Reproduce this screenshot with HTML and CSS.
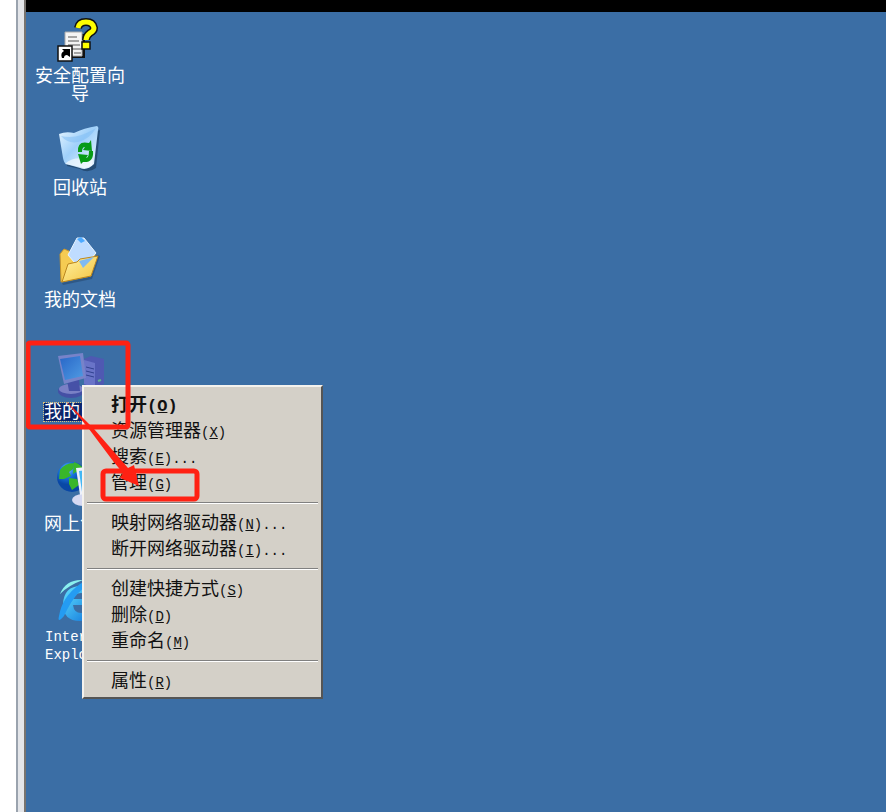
FILE: index.html
```html
<!DOCTYPE html>
<html lang="zh-CN">
<head>
<meta charset="utf-8">
<title>桌面</title>
<link rel="stylesheet" href="styles.css">
</head>
<body>
<div class="frame"></div>
<main class="screen">
  <div class="topbar"></div>
  <div class="desktop">
    <nav class="icons">
      <button class="item">
        <svg viewBox="0 0 48 48">
          <path d="M12 17h17v24H12z" fill="#111"/>
          <path d="M9 15h17v24H9z" fill="#f4f4f4" stroke="#aaa"/>
          <path d="M12 20h9M12 24h11M12 28h12M16 32h10M18 36h7" stroke="#8a8a8a" stroke-width="1.5"/>
          <path d="M22 11q1-6 8-6t8 6q0 3-4 5-4 3-4 7" fill="none" stroke="#111" stroke-width="8"/>
          <path d="M22 11q1-6 8-6t8 6q0 3-4 5-4 3-4 7" fill="none" stroke="#ff0" stroke-width="5"/>
          <path d="M26 25h8v7h-8z" fill="#ff0" stroke="#111" stroke-width="1.5"/>
          <path d="M2 29h14v15H2z" fill="#fff" stroke="#111" stroke-width="1.5"/>
          <path d="M6 32h8v8l-3-2q-3 0-3 3H6q-2-5 2-7z" fill="#000"/>
        </svg>
        <span class="label">安全配置向导</span>
      </button>
      <button class="item">
        <svg viewBox="0 0 48 48">
          <defs><linearGradient id="bin" x2="1" y2="1"><stop stop-color="#eaf7ff"/><stop offset=".45" stop-color="#9fd0fa"/><stop offset="1" stop-color="#f2faff"/></linearGradient></defs>
          <path d="M6 7q15 2 37-7l-4 38q-8 6-16 1L10 36z" fill="#173757" opacity=".6" transform="translate(1 1)"/>
          <path d="M3 5Q10 2 18 4 28-1 41-3q2 1 1 4l-4 34q-7 7-14 4l-14-4q-2-1-3-6z" fill="url(#bin)"/>
          <path d="M5 7q16 4 35-8-6 11-18 14Q12 15 5 7z" fill="#7dbbf4" opacity=".5"/>
          <path d="M9 35q8-9 28-4l-1 5q-6 5-12 2z" fill="#fff" opacity=".6"/>
          <path d="M22 23q-1-12 11-9l2-3 1 11-9-1 2-3q-3 0-3 5zM37 22q1 12-10 11l-2 2-3-10 10 1-2 3q3 0 3-7z" fill="#079b16"/>
        </svg>
        <span class="label">回收站</span>
      </button>
      <button class="item">
        <svg viewBox="0 0 48 48">
          <defs><linearGradient id="fold" x2="1" y2="1"><stop stop-color="#fff3a4"/><stop offset="1" stop-color="#f4c33f"/></linearGradient></defs>
          <path d="M6 42l27-6 8-22 3 1-8 23-29 6z" fill="#25476d" opacity=".55"/>
          <path d="M4 13l4-5 5 2 2 4 24-1-4 22L5 41z" fill="#f5cb52" stroke="#c7942b"/>
          <path d="M21-3l7 0L40 12 25 29 12 14z" fill="#bfdcff" stroke="#e9f5ff"/>
          <path d="M21-2l4-2 4 4-4 2z" fill="#4eaaff"/>
          <path d="M6 41l6-18 9-2 3-3 18-3-7 20z" fill="url(#fold)" stroke="#bb861e"/>
          <path d="M23 20l15-4-11 11z" fill="#80baf3"/>
        </svg>
        <span class="label">我的文档</span>
      </button>
      <button class="item selected">
        <svg viewBox="0 0 48 48">
          <defs><linearGradient id="pc" x2="1" y2="1"><stop stop-color="#2866c7"/><stop offset="1" stop-color="#4f9be3"/></linearGradient></defs>
          <path d="M28 6l7-3 13 3v25l-11 5-9-4z" fill="#4f59b2"/>
          <path d="M28 7l11 3v25l-11-4z" fill="#6974c8"/>
          <path d="M30 14l8 2M30 18l8 2M30 22l8 2" stroke="#30418f"/>
          <path d="M42 28l3-1" stroke="#62b38e" stroke-width="2"/>
          <ellipse cx="15" cy="38" rx="13" ry="7" fill="#4550a5"/>
          <ellipse cx="15" cy="36" rx="12" ry="5" fill="#7a80c5"/>
          <path d="M11 27h12l1 11H13z" fill="#4651a7"/>
          <path d="M2 3l25-3 3 25-22 6z" fill="#7783c9"/>
          <path d="M4 6l20-3 3 20-18 4z" fill="url(#pc)"/>
        </svg>
        <span class="label">我的电脑</span>
      </button>
      <button class="item">
        <svg viewBox="0 0 48 48">
          <defs><radialGradient id="globe" cx=".35" cy=".25"><stop stop-color="#83c8ff"/><stop offset=".5" stop-color="#1974de"/><stop offset="1" stop-color="#0947a5"/></radialGradient></defs>
          <circle cx="16" cy="12" r="15" fill="url(#globe)"/>
          <path d="M4 5Q9-2 18-2l-1 6-4 3 2 4-7 3-5 0zM18-3q9 3 12 11l-5 3-5-4-3 2zM13 13l8 1 2 6-7 5-3-6z" fill="#39b62b"/>
          <ellipse cx="27" cy="35" rx="11" ry="6" fill="#d6d9f2"/>
          <path d="M20 3l24-2-2 26-18 3z" fill="#edf1fc"/>
          <path d="M23 6l18-2-2 20-13 3z" fill="#43b7f4"/>
        </svg>
        <span class="label">网上邻居</span>
      </button>
      <button class="item">
        <svg viewBox="0 0 48 48">
          <defs><linearGradient id="ie" x2="1" y2="1"><stop stop-color="#63e4ff"/><stop offset="1" stop-color="#086bd8"/></linearGradient></defs>
          <path d="M35 28H17q1 8 8 8 5 0 8-4h9q-5 12-18 12Q7 44 7 27 8 9 25 9q19 0 18 19zM17 22h16q-1-6-8-6t-8 6z" fill="url(#ie)" fill-rule="evenodd"/>
          <path d="M8 39Q1 47 3 39 6 20 24 7 35 0 43 3q5 3 0 13 2-10-6-9Q22 9 8 39z" fill="#249cf2"/>
          <path d="M4 17Q10 2 27 3 13 8 4 17z" fill="#8af0ef"/>
        </svg>
        <span class="label latin">Internet Explorer</span>
      </button>
    </nav>

    <div class="menu" role="menu">
      <button role="menuitem" class="default">打开<span class="key">(<u>O</u>)</span></button>
      <button role="menuitem">资源管理器<span class="key">(<u>X</u>)</span></button>
      <button role="menuitem">搜索<span class="key">(<u>E</u>)...</span></button>
      <button role="menuitem">管理<span class="key">(<u>G</u>)</span></button>
      <hr>
      <button role="menuitem">映射网络驱动器<span class="key">(<u>N</u>)...</span></button>
      <button role="menuitem">断开网络驱动器<span class="key">(<u>I</u>)...</span></button>
      <hr>
      <button role="menuitem">创建快捷方式<span class="key">(<u>S</u>)</span></button>
      <button role="menuitem">删除<span class="key">(<u>D</u>)</span></button>
      <button role="menuitem">重命名<span class="key">(<u>M</u>)</span></button>
      <hr>
      <button role="menuitem">属性<span class="key">(<u>R</u>)</span></button>
    </div>

    <svg class="marks" viewBox="0 0 180 500">
      <rect x="2" y="331" width="100" height="84" rx="2"/>
      <rect x="77" y="459" width="94" height="28" rx="3"/>
      <path d="M40 389L68 417 96 449 102 456 108 453 113 474 94 466 97 461 87 449 63 417Z"/>
    </svg>
  </div>
</main>
</body>
</html>
```
FILE: styles.css
```css
* { box-sizing: border-box; }

body {
  margin: 0;
  min-height: 100vh;
  display: flex;
  padding-left: 16px;
  background: #fff;
  font-family: "Liberation Sans", "Noto Sans CJK SC", sans-serif;
  font-size: 18px;
}

button {
  display: block;
  margin: 0;
  padding: 0;
  border: 0;
  background: none;
  color: inherit;
  font: inherit;
}

.frame {
  width: 10px;
  background: #e3e5e9;
  border-left: 2px solid #9aa3ae;
  border-right: 2px solid #77736f;
}

.screen {
  flex: 1;
  display: flex;
  flex-direction: column;
}

.topbar {
  height: 12px;
  background: #000;
}

.desktop {
  flex: 1;
  position: relative;
  padding-top: 5px;
  background: #3b6ea5;
}

.icons { width: 108px; }

.item {
  display: flex;
  flex-direction: column;
  align-items: center;
  gap: 2px;
  width: 100%;
  height: 112px;
  color: #fff;
}

.item svg {
  width: 48px;
  height: 48px;
  overflow: visible;
}

.label {
  max-width: 92px;
  line-height: 18px;
}

.selected .label {
  background: #0a246a;
  outline: 1px dotted #d8c07a;
}

.latin,
.key {
  font-family: "Liberation Mono", monospace;
  font-size: 14px;
}

.latin {
  max-width: 70px;
  padding-top: 1px;
  text-align: left;
}

.menu {
  position: absolute;
  left: 56px;
  top: 373px;
  width: 241px;
  padding: 5px 3px 3px;
  background: #d4d0c8;
  border: 2px solid;
  border-color: #f4f2ee #555 #555 #f4f2ee;
}

.menu button {
  width: 100%;
  height: 26px;
  padding-left: 24px;
  line-height: 26px;
  text-align: left;
  color: #111;
}

.menu .default { font-weight: 700; }

.default .key { font-size: 17px; }

.menu hr {
  height: 2px;
  margin: 6px 0;
  border: 0;
  border-top: 1px solid #808080;
  border-bottom: 1px solid #fff;
}

.marks {
  position: absolute;
  left: 0;
  top: 0;
  width: 180px;
  height: 500px;
  pointer-events: none;
}

.marks rect {
  fill: none;
  stroke: #ff2113;
  stroke-width: 5;
}

.marks path { fill: #ff2113; }
```
